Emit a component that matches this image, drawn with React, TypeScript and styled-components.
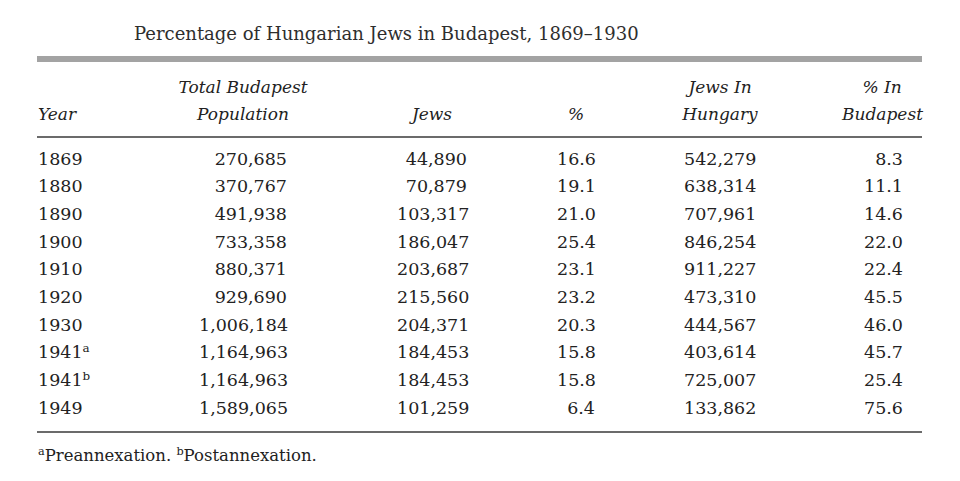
import React from 'react';
import styled, {createGlobalStyle} from 'styled-components';

type RowType = {
    year: string
    mark?: string
    total: string
    jews: string
    pct: string
    hungary: string
    inBudapest: string
}

const rows: RowType[] = [
    {year: '1869', total: '270,685', jews: '44,890', pct: '16.6', hungary: '542,279', inBudapest: '8.3'},
    {year: '1880', total: '370,767', jews: '70,879', pct: '19.1', hungary: '638,314', inBudapest: '11.1'},
    {year: '1890', total: '491,938', jews: '103,317', pct: '21.0', hungary: '707,961', inBudapest: '14.6'},
    {year: '1900', total: '733,358', jews: '186,047', pct: '25.4', hungary: '846,254', inBudapest: '22.0'},
    {year: '1910', total: '880,371', jews: '203,687', pct: '23.1', hungary: '911,227', inBudapest: '22.4'},
    {year: '1920', total: '929,690', jews: '215,560', pct: '23.2', hungary: '473,310', inBudapest: '45.5'},
    {year: '1930', total: '1,006,184', jews: '204,371', pct: '20.3', hungary: '444,567', inBudapest: '46.0'},
    {year: '1941', mark: 'a', total: '1,164,963', jews: '184,453', pct: '15.8', hungary: '403,614', inBudapest: '45.7'},
    {year: '1941', mark: 'b', total: '1,164,963', jews: '184,453', pct: '15.8', hungary: '725,007', inBudapest: '25.4'},
    {year: '1949', total: '1,589,065', jews: '101,259', pct: '6.4', hungary: '133,862', inBudapest: '75.6'},
];

// column tracks: year | total | jews | % | jews in hungary | % in budapest
const COLUMNS = '113px 186px 192px 96px 192px 106px';

const App = () => {
    return (
        <>
            <GlobalStyle/>
            <Page>
                <Title>Percentage of Hungarian Jews in Budapest, 1869–1930</Title>
                <ThickRule/>
                <Head>
                    <YearHead>Year</YearHead>
                    <HeadCell>Total Budapest<br/>Population</HeadCell>
                    <HeadCell>Jews</HeadCell>
                    <HeadCell>%</HeadCell>
                    <HeadCell>Jews In<br/>Hungary</HeadCell>
                    <HeadCell $inset={26}>% In<br/>Budapest</HeadCell>
                </Head>
                <Body>
                    {rows.map((r, i) => (
                        <Row key={i}>
                            <YearCell>{r.year}{r.mark && <Sup>{r.mark}</Sup>}</YearCell>
                            <Cell><Num $w={88}>{r.total}</Num></Cell>
                            <Cell><Num $w={70}>{r.jews}</Num></Cell>
                            <Cell><Num $w={38}>{r.pct}</Num></Cell>
                            <Cell><Num $w={72}>{r.hungary}</Num></Cell>
                            <Cell $inset={28}><Num $w={40}>{r.inBudapest}</Num></Cell>
                        </Row>
                    ))}
                </Body>
                <Footnote>
                    <Sup>a</Sup>Preannexation. <Sup>b</Sup>Postannexation.
                </Footnote>
            </Page>
        </>
    );
};

export default App;

const GlobalStyle = createGlobalStyle`
    html, body {
        margin: 0;
        padding: 0;
        background: #ffffff;
    }
    body {
        font-family: "DejaVu Serif", "Liberation Serif", serif;
        color: #222222;
    }
`

const Page = styled.div`
    width: 885px;
    margin-left: 37px;
`
const Title = styled.div`
    padding: 22px 0 0 97px;
    font-size: 18px;
    line-height: 24px;
    height: 24px;
    margin-bottom: 10px;
    color: #2e2e2e;
    white-space: nowrap;
`
const ThickRule = styled.div`
    height: 6px;
    background-color: #a3a3a3;
`
const Head = styled.div`
    display: grid;
    grid-template-columns: ${COLUMNS};
    align-items: end;
    padding: 12px 0 8px;
    border-bottom: 2px solid #6b6b6b;
    font-style: italic;
    font-size: 17px;
    line-height: 27px;
`
const YearHead = styled.div`
    padding-left: 1px;
`
const HeadCell = styled.div<{ $inset?: number }>`
    text-align: center;
    padding-left: ${(props) => props.$inset ?? 0}px;
    white-space: nowrap;
`
const Body = styled.div`
    padding: 7px 0 9px;
    border-bottom: 2px solid #6b6b6b;
`
const Row = styled.div`
    display: grid;
    grid-template-columns: ${COLUMNS};
    height: 27.67px;
    align-items: center;
    font-size: 17.5px;
`
const YearCell = styled.div`
    padding-left: 1px;
    white-space: nowrap;
`
const Cell = styled.div<{ $inset?: number }>`
    display: flex;
    justify-content: center;
    padding-left: ${(props) => props.$inset ?? 0}px;
`
const Num = styled.span<{ $w: number }>`
    width: ${(props) => props.$w}px;
    text-align: right;
    white-space: nowrap;
`
const Sup = styled.sup`
    font-size: 0.68em;
    line-height: 0;
    vertical-align: 0.5em;
`
const Footnote = styled.div`
    margin-top: 11px;
    padding-left: 1px;
    font-size: 16.5px;
    line-height: 24px;
    white-space: nowrap;
`
